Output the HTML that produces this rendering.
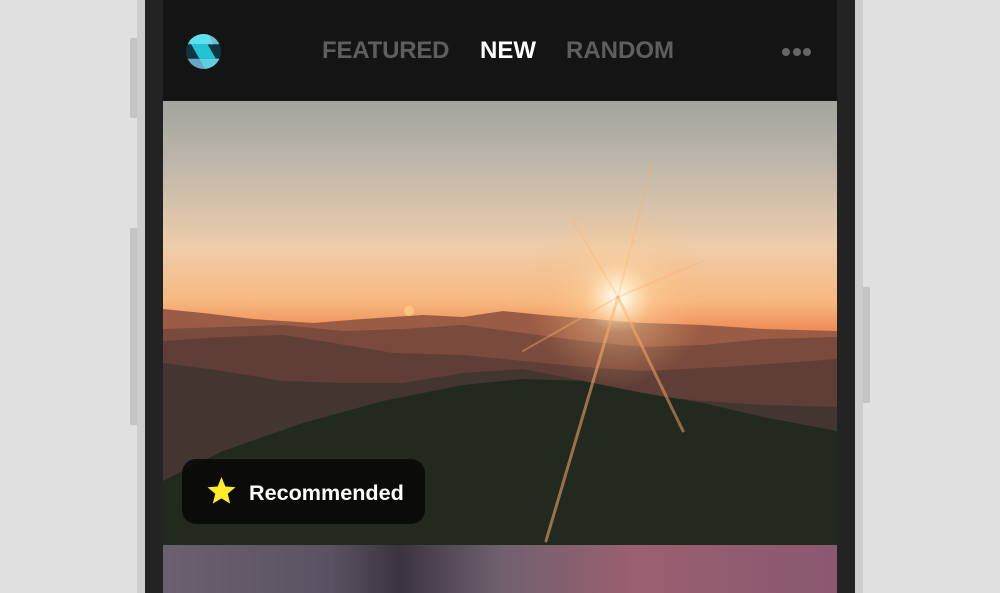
<!DOCTYPE html>
<html><head><meta charset="utf-8"><style>
html,body{margin:0;padding:0;width:1000px;height:593px;overflow:hidden;background:#e0e0e0;font-family:"Liberation Sans",Arial,sans-serif}
.abs{position:absolute}
</style></head><body>
<div class="abs" style="left:130px;top:38px;width:8px;height:80px;background:#c4c4c4;border-radius:2px"></div>
<div class="abs" style="left:130px;top:228px;width:8px;height:197px;background:#c4c4c4;border-radius:2px"></div>
<div class="abs" style="left:862px;top:287px;width:8px;height:116px;background:#c4c4c4;border-radius:2px"></div>
<div class="abs" style="left:137px;top:0;width:726px;height:593px;background:#cdcdcd"></div>
<div class="abs" style="left:145px;top:0;width:710px;height:593px;background:#232323"></div>
<div class="abs" style="left:163px;top:0;width:674px;height:101px;background:#141414"></div>
<svg class="abs" style="left:185px;top:33px" width="37" height="37" viewBox="0 0 36 36">
<defs><clipPath id="c"><circle cx="18" cy="18" r="17"/></clipPath></defs>
<g clip-path="url(#c)">
<rect width="36" height="36" fill="#0f3444"/>
<polygon points="0,0 36,0 36,11 0,11" fill="#7ab6cc"/>
<polygon points="0,0 22,0 28,11 6,11" fill="#5fe0ee"/>
<polygon points="0,25 36,25 36,36 0,36" fill="#6aa6c0"/>
<polygon points="14,25 36,25 36,36 20,36" fill="#5cd0e0"/>
<polygon points="6,11 22,11 30,25 14,25" fill="#22c4d2"/>
</g></svg>
<div class="abs" style="left:322px;top:37px;font-size:24px;font-weight:bold;color:#5e5e5e;letter-spacing:-0.2px">FEATURED</div>
<div class="abs" style="left:480px;top:37px;font-size:24px;font-weight:bold;color:#fff">NEW</div>
<div class="abs" style="left:566px;top:37px;font-size:24px;font-weight:bold;color:#5e5e5e">RANDOM</div>
<div class="abs" style="left:782px;top:48px;width:8px;height:8px;border-radius:50%;background:#666"></div>
<div class="abs" style="left:793px;top:48px;width:8px;height:8px;border-radius:50%;background:#666"></div>
<div class="abs" style="left:803px;top:48px;width:8px;height:8px;border-radius:50%;background:#666"></div>
<svg class="abs" style="left:163px;top:101px" width="674" height="444" viewBox="0 0 674 444">
<defs>
<linearGradient id="sky" x1="0" y1="0" x2="0" y2="1">
<stop offset="0" stop-color="#a2a49e"/><stop offset="0.15" stop-color="#c0b8aa"/>
<stop offset="0.33" stop-color="#eecdaa"/><stop offset="0.45" stop-color="#f7b880"/>
<stop offset="0.52" stop-color="#ee8a54"/><stop offset="0.7" stop-color="#a85a44"/><stop offset="1" stop-color="#6a4036"/></linearGradient>
<radialGradient id="sun" cx="455" cy="196" r="90" gradientUnits="userSpaceOnUse">
<stop offset="0" stop-color="#fff" stop-opacity="1"/><stop offset="0.1" stop-color="#fff8e0" stop-opacity=".9"/><stop offset="0.4" stop-color="#ffd8a0" stop-opacity=".35"/><stop offset="1" stop-color="#ffb070" stop-opacity="0"/></radialGradient>
</defs>
<rect width="674" height="444" fill="url(#sky)"/>
<polygon points="0,208 40,212 90,218 150,222 200,218 260,214 300,216 340,210 380,214 430,218 480,222 540,224 600,228 674,230 674,444 0,444" fill="#9a5c44"/>
<polygon points="0,228 60,226 120,224 180,230 240,228 300,224 360,232 420,240 480,246 540,244 600,238 674,236 674,444 0,444" fill="#7a4a3c"/>
<polygon points="0,240 60,236 120,234 170,242 230,252 300,254 360,260 420,266 480,270 560,266 620,262 674,258 674,444 0,444" fill="#5e3e36"/>
<polygon points="0,262 60,270 120,280 180,282 240,282 300,272 360,268 420,280 480,294 540,300 600,304 674,306 674,444 0,444" fill="#433630"/>
<polygon points="0,380 60,350 140,322 220,300 300,284 360,278 420,280 480,292 540,302 600,316 674,330 674,444 0,444" fill="#22291f"/>
<circle cx="455" cy="196" r="90" fill="url(#sun)"/>
<g stroke="#ffae68" stroke-linecap="round">
<line x1="455" y1="196" x2="383" y2="440" stroke-width="3" stroke-opacity=".55"/>
<line x1="455" y1="196" x2="520" y2="330" stroke-width="3" stroke-opacity=".5"/>
<line x1="455" y1="196" x2="490" y2="60" stroke-width="2" stroke-opacity=".3"/>
<line x1="455" y1="196" x2="360" y2="250" stroke-width="2" stroke-opacity=".4"/>
<line x1="455" y1="196" x2="540" y2="160" stroke-width="2" stroke-opacity=".35"/>
<line x1="455" y1="196" x2="410" y2="120" stroke-width="2" stroke-opacity=".3"/>
</g>
<circle cx="246" cy="210" r="5" fill="#ffd080" opacity=".7"/>
</svg>
<div class="abs" style="left:182px;top:459px;width:243px;height:65px;border-radius:14px;background:rgba(8,8,8,.88)"></div>
<svg class="abs" style="left:205px;top:475px" width="33" height="32" viewBox="0 0 24 24"><polygon points="12,1.5 14.9,8.6 22.5,9.2 16.7,14.1 18.5,21.5 12,17.5 5.5,21.5 7.3,14.1 1.5,9.2 9.1,8.6" fill="#fdec2a"/></svg>
<div class="abs" style="left:249px;top:480px;font-size:21.6px;font-weight:bold;color:#fff">Recommended</div>
<div class="abs" style="left:163px;top:545px;width:674px;height:48px;background:linear-gradient(90deg,#6a6070 0%,#5a5262 25%,#3a3440 35%,#70606e 50%,#9a6070 70%,#8a5870 100%)"></div>
</body></html>
